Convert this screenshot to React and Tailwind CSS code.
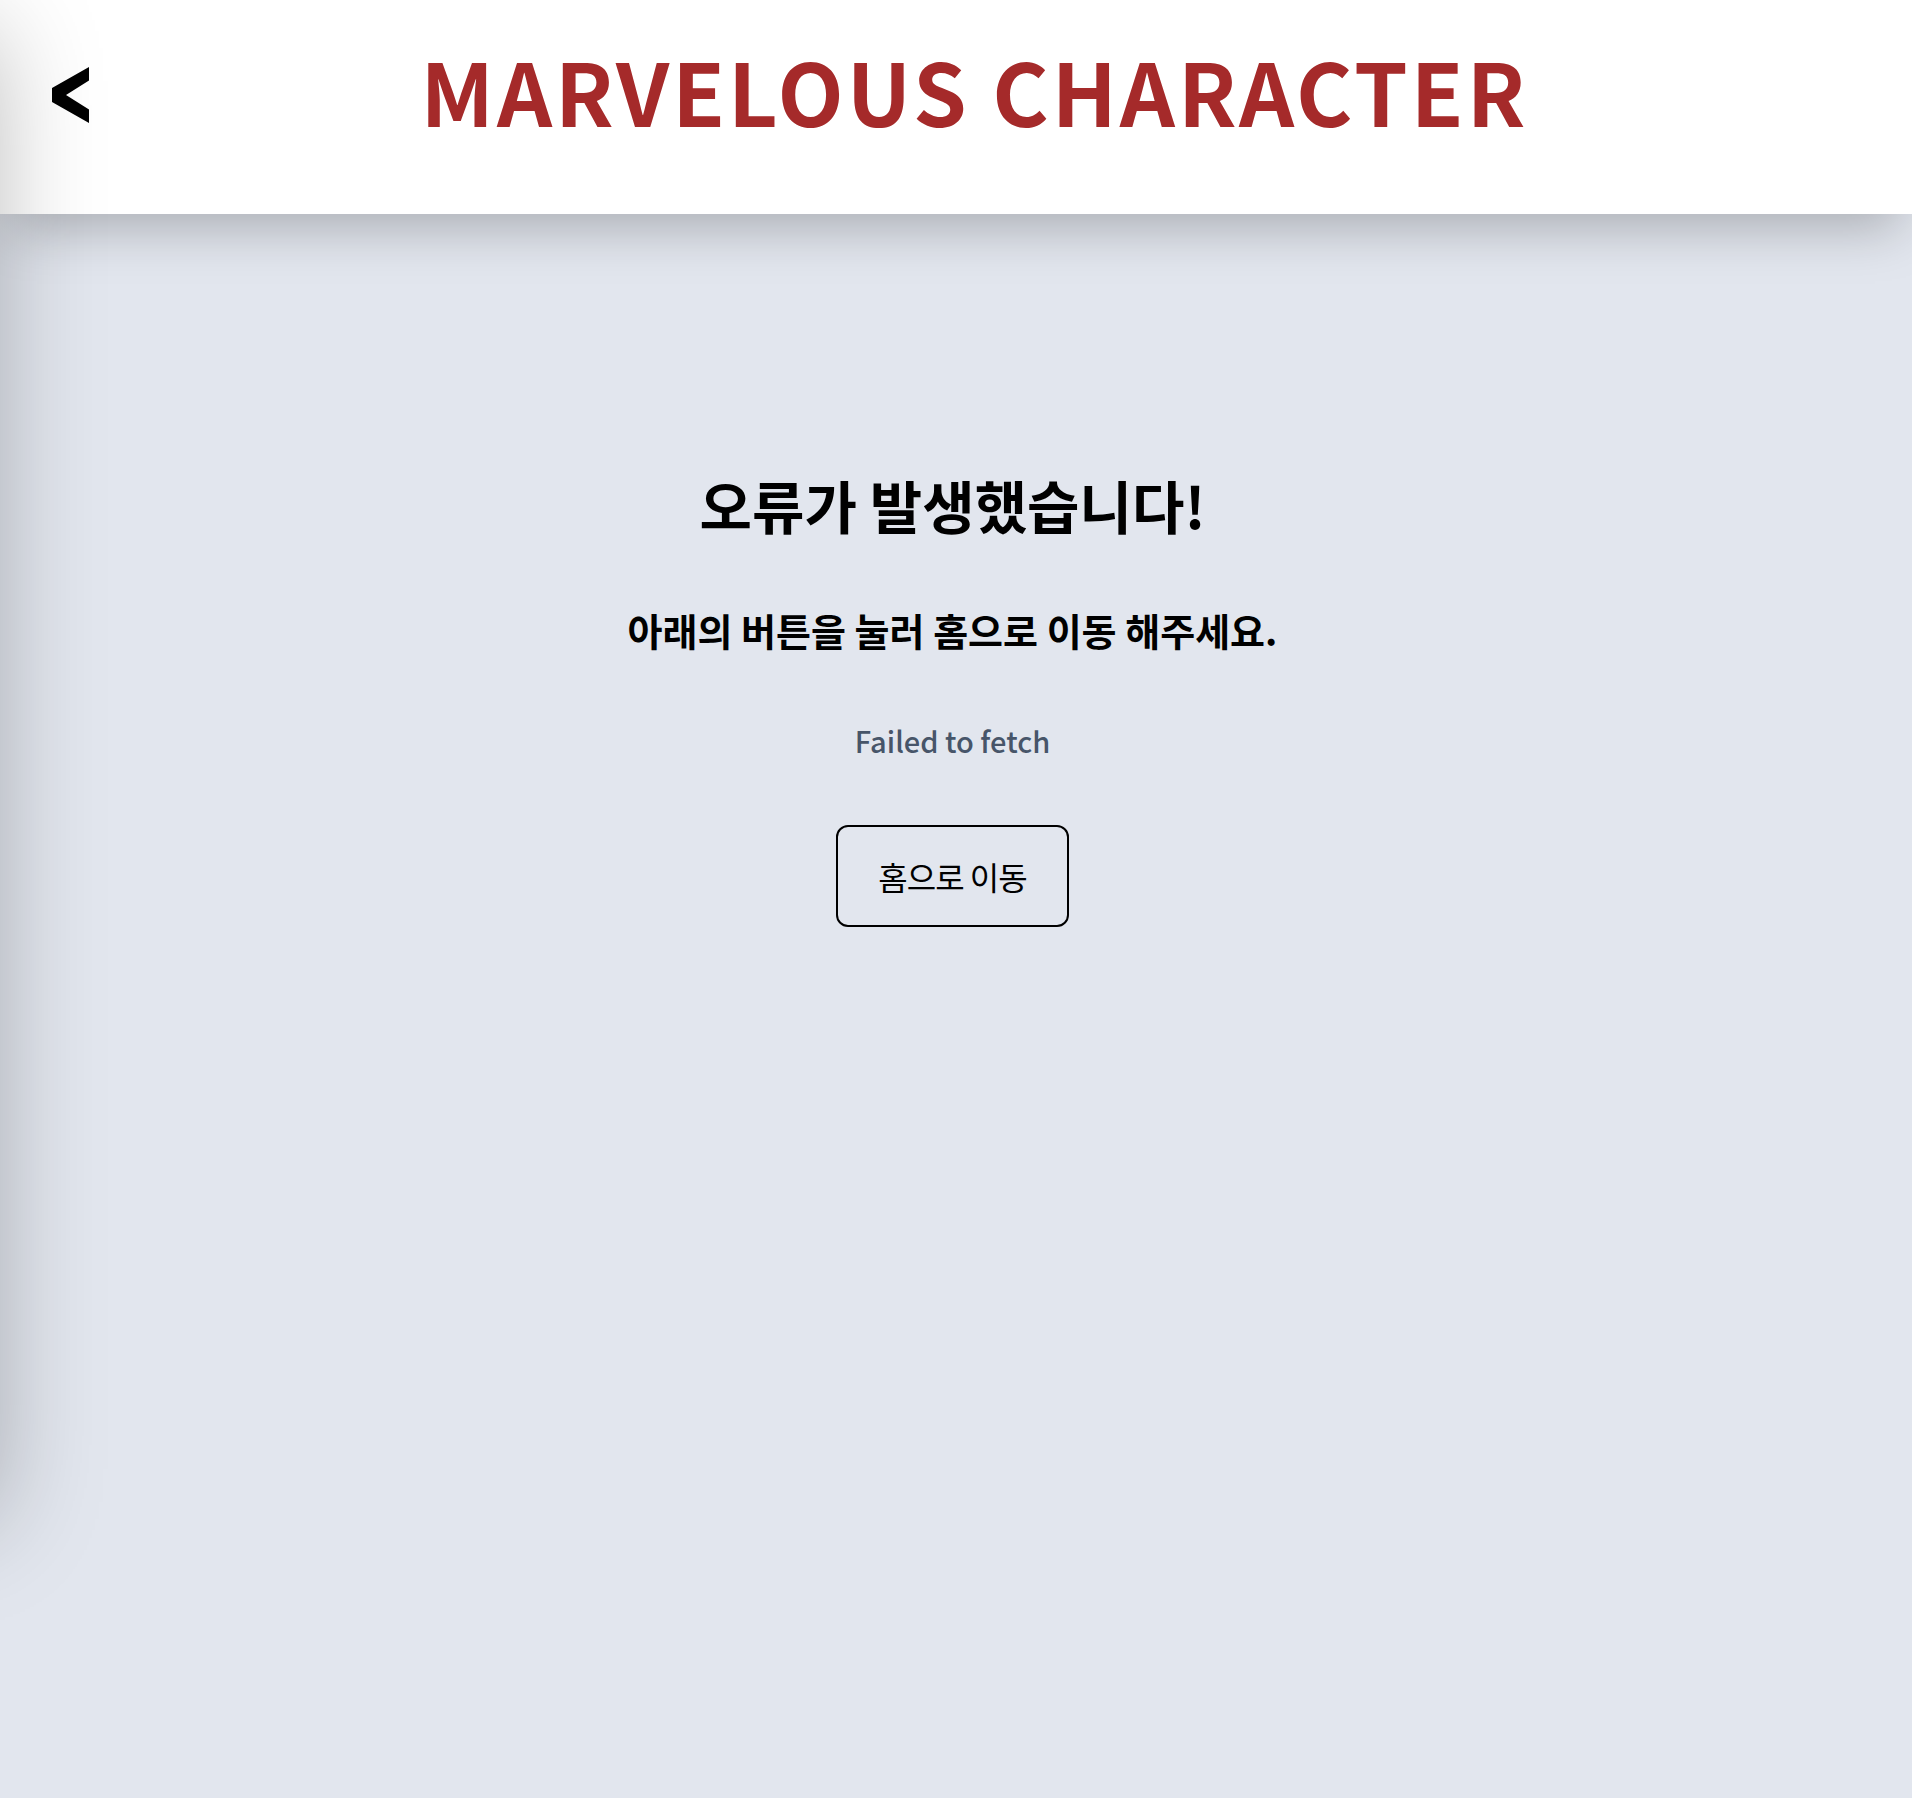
const font = {
  fontFamily: '"Noto Sans CJK KR", "Noto Sans", sans-serif',
};

const BackIcon = () => (
  <svg width="37" height="56" viewBox="0 0 37 56" aria-hidden="true">
    <polygon points="37,0 37,13.5 14,28 37,42.5 37,56 0,35 0,21" fill="#000" />
  </svg>
);

export default function App() {
  return (
    <div
      className="relative min-h-screen overflow-hidden bg-[#e2e6ee]"
      style={font}
    >
      {/* hidden side menu, only its shadow reaches the page */}
      <div className="fixed top-0 -left-[320px] z-50 h-[1500px] w-[320px] bg-white shadow-[0_25px_100px_-6px_rgba(0,0,0,0.28)]" />

      <header className="relative z-10 flex h-[214px] items-center bg-white px-[52px] pb-[24px] shadow-2xl">
        <button className="flex items-center">
          <BackIcon />
        </button>
        <h1 className="-mt-[10px] flex-1 text-center text-[86px] font-bold leading-none tracking-[0.035em] text-[#a52a2a]">
          MARVELOUS CHARACTER
        </h1>
      </header>

      <main className="flex flex-col items-center pt-[254px] pr-[7px] text-center">
        <h2 className="text-[57px] font-bold leading-[72px] text-black">
          오류가 발생했습니다!
        </h2>
        <p className="mt-[66px] text-[38px] font-bold leading-[48px] text-black">
          아래의 버튼을 눌러 홈으로 이동 해주세요.
        </p>
        <p className="mt-[66px] text-[29px] font-medium leading-[40px] text-[#475569]">
          Failed to fetch
        </p>
        <button className="mt-[65px] rounded-xl border-2 border-black px-[40px] py-[31px] text-[32px] leading-[36px] tracking-[-0.03em] text-black">
          홈으로 이동
        </button>
      </main>
    </div>
  );
}
